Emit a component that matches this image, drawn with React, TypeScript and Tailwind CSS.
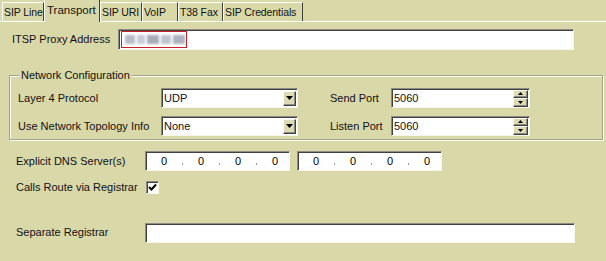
import React from "react";

const sunken =
  "bg-white border border-t-[#8c8c84] border-l-[#8c8c84] border-r-[#f6f6ea] border-b-[#f6f6ea] shadow-[inset_1px_1px_0_#404040]";
const raised =
  "bg-[#dcdbb6] border border-t-[#fbfbf2] border-l-[#fbfbf2] border-r-[#404040] border-b-[#404040] shadow-[inset_-1px_-1px_0_#8c8c80]";

function Tab({ label, w, selected }: { label: string; w: string; selected?: boolean }) {
  if (selected) {
    return (
      <div
        className={`${w} h-[23px] -mb-[1px] relative z-10 bg-[#d9d8a9] border-l border-t border-l-white border-t-white border-r border-r-[#404040] flex items-start pt-[3px] pl-[2px] whitespace-nowrap`}
      >
        <span className="text-[11.5px] leading-[14px]">{label}</span>
      </div>
    );
  }
  return (
    <div
      className={`${w} h-[19px] bg-[#d9d8a9] border-l border-t border-l-white border-t-white border-r border-r-[#404040] flex items-center pl-[1px] whitespace-nowrap`}
    >
      <span className="text-[10.5px] leading-[13px] pt-[1px] tracking-[-0.1px]">{label}</span>
    </div>
  );
}

function Select({ value }: { value: string }) {
  return (
    <div className={`${sunken} w-[137px] h-[20px] flex items-center pl-[2px] pr-[1px]`}>
      <span className="flex-1 text-[11px] leading-none">{value}</span>
      <div className={`${raised} w-[13px] h-[15px] flex items-center justify-center`}>
        <svg width="7" height="4" viewBox="0 0 7 4">
          <path d="M0 0H7L3.5 4Z" fill="#000" />
        </svg>
      </div>
    </div>
  );
}

function Spin({ value }: { value: string }) {
  return (
    <div className={`${sunken} w-[139px] h-[20px] flex items-center pl-[2px] pr-[1px]`}>
      <span className="flex-1 text-[11px] leading-none">{value}</span>
      <div className="flex flex-col w-[15px] h-[17px]">
        <div className={`${raised} h-[8px] flex items-center justify-center`}>
          <svg width="5" height="3" viewBox="0 0 5 3">
            <path d="M0 3H5L2.5 0Z" fill="#000" />
          </svg>
        </div>
        <div className={`${raised} h-[9px] flex items-center justify-center`}>
          <svg width="5" height="3" viewBox="0 0 5 3">
            <path d="M0 0H5L2.5 3Z" fill="#000" />
          </svg>
        </div>
      </div>
    </div>
  );
}

function IpBox() {
  return (
    <div className={`${sunken} w-[145px] h-[20px] flex items-center pl-[12px] pr-[8px]`}>
      {[0, 1, 2, 3].map((i) => (
        <React.Fragment key={i}>
          <span className="w-[12px] text-center text-[11px] leading-none text-black">0</span>
          {i < 3 && (
            <span className="flex-1 flex justify-center">
              <span className="w-[1px] h-[2px] bg-[#9a9a9a] mt-[5px]" />
            </span>
          )}
        </React.Fragment>
      ))}
    </div>
  );
}

export default function App() {
  return (
    <div
      className="w-[606px] h-[261px] bg-[#d9d8a9] text-[#111] overflow-hidden whitespace-nowrap"
      style={{ fontFamily: '"Liberation Sans", Arial, sans-serif' }}
    >
      {/* tabs */}
      <div className="flex items-end h-[22px] pl-[2px] border-b border-b-white">
        <Tab label="SIP Line" w="w-[42px]" />
        <Tab label="Transport" w="w-[56px]" selected />
        <Tab label="SIP URI" w="w-[42px]" />
        <Tab label="VoIP" w="w-[36px]" />
        <Tab label="T38 Fax" w="w-[45px]" />
        <Tab label="SIP Credentials" w="w-[80px]" />
      </div>

      {/* ITSP */}
      <div className="flex items-center mt-[7px] h-[21px]">
        <span className="w-[118px] pl-[12px] text-[11px]">ITSP Proxy Address</span>
        <div className={`${sunken} w-[456px] h-[21px] flex items-center pl-[2px]`}>
          <div className="w-[66px] h-[17px] border border-[#c8202a] flex items-center pl-[3px] gap-[2px] overflow-hidden">
            <div className="w-[10px] h-[9px] bg-[#b8bcc8] blur-[1px]" />
            <div className="w-[8px] h-[9px] bg-[#c8ccd6] blur-[1px]" />
            <div className="w-[12px] h-[9px] bg-[#a8acb8] blur-[1px]" />
            <div className="w-[10px] h-[9px] bg-[#c0c4ce] blur-[1px]" />
            <div className="w-[12px] h-[9px] bg-[#aeb2be] blur-[1px]" />
          </div>
        </div>
      </div>

      {/* Network Configuration group */}
      <div className="relative ml-[9px] mr-[3px] mt-[25px] h-[65px] border border-[#a4a48a] shadow-[inset_1px_1px_0_#fbfbef,1px_1px_0_#fbfbef] pt-[12px] pl-[8px]">
        <span className="absolute -top-[7px] left-[9px] px-[2px] bg-[#d9d8a9] text-[11px] leading-[13px]">
          Network Configuration
        </span>
        <div className="flex flex-col gap-[8px]">
          <div className="flex items-center">
            <span className="w-[143px] text-[11px]">Layer 4 Protocol</span>
            <Select value="UDP" />
            <span className="ml-[32px] w-[61px] text-[11px]">Send Port</span>
            <Spin value="5060" />
          </div>
          <div className="flex items-center">
            <span className="w-[143px] text-[11px]">Use Network Topology Info</span>
            <Select value="None" />
            <span className="ml-[32px] w-[61px] text-[11px]">Listen Port</span>
            <Spin value="5060" />
          </div>
        </div>
      </div>

      {/* DNS */}
      <div className="flex items-center mt-[11px] pl-[16px]">
        <span className="w-[129px] text-[11px]">Explicit DNS Server(s)</span>
        <IpBox />
        <div className="w-[7px]" />
        <IpBox />
      </div>

      {/* Calls route */}
      <div className="flex items-center mt-[8px] pl-[16px]">
        <span className="w-[130px] text-[11px]">Calls Route via Registrar</span>
        <div className={`${sunken} w-[13px] h-[13px] flex items-center justify-center`}>
          <svg width="9" height="9" viewBox="0 0 9 9">
            <path d="M1 4L3.5 6.5L8 1.5" stroke="#000" strokeWidth="2" fill="none" />
          </svg>
        </div>
      </div>

      {/* Separate Registrar */}
      <div className="flex items-center mt-[27px] pl-[16px]">
        <span className="w-[129px] text-[11px]">Separate Registrar</span>
        <div className={`${sunken} w-[430px] h-[20px]`} />
      </div>
    </div>
  );
}
